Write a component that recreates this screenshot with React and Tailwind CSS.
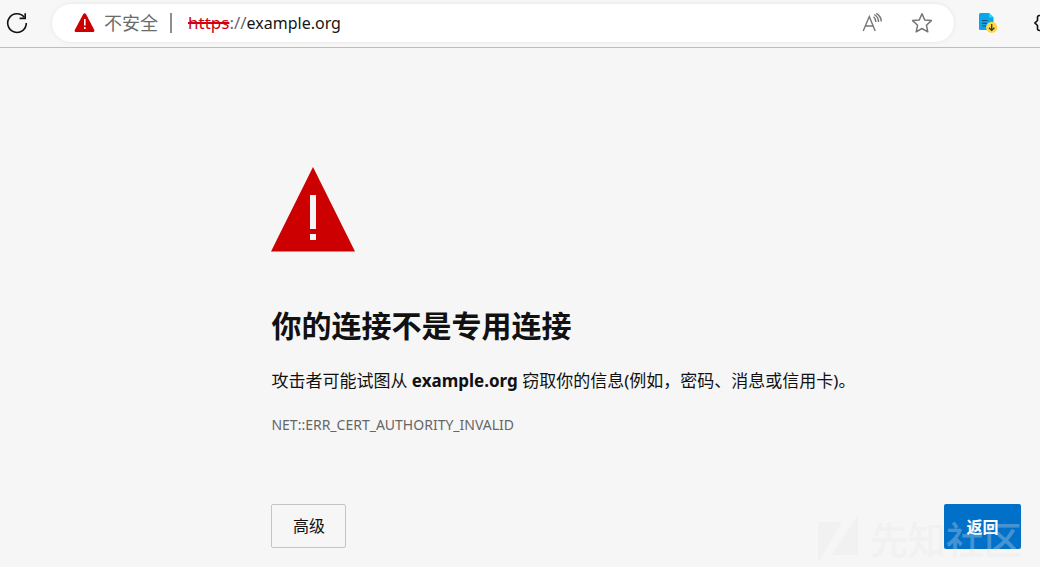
import React from "react";

function AddressBar() {
  return (
    <header className="flex h-12 items-center overflow-hidden border-b border-[#bdbdbd] bg-[#f7f7f7] pb-0.5">
      <button type="button" aria-label="刷新" className="ml-1 mr-[22px] shrink-0">
        <svg className="block" width="26" height="26" viewBox="0 0 26 26" fill="none" stroke="#111" strokeWidth="1.6">
          <path d="M20.2 7.2A9.3 9.3 0 1 0 22.3 13" />
          <path d="M21.2 3.2V8.4H15.6" />
        </svg>
      </button>
      <div className="flex h-[38px] min-w-0 flex-1 items-center rounded-full bg-white pl-[22px] pr-[21px] shadow-[0_0_4px_rgba(0,0,0,0.08)]">
        <svg className="block shrink-0" width="22" height="20" viewBox="0 0 22 20">
          <path d="M9.3 1Q10.7 -.6 12 1L20.3 17Q20.8 19 19 19H2Q0 19 .8 17Z" fill="#c00" />
          <path d="M10 6h1.6v6.5h-1.6zM10 14h1.6v2h-1.6z" fill="#fff" />
        </svg>
        <span className="ml-2 whitespace-nowrap text-[18px] leading-6 text-[#6b6b6b]">不安全</span>
        <span className="ml-3 h-5 w-0.5 shrink-0 bg-[#8d8d8d]" />
        <label htmlFor="address" className="ml-4 whitespace-nowrap text-[17px] leading-6 text-[#6b6b6b]">
          <span className="text-[#d00010] line-through decoration-2">https</span>://
        </label>
        <input id="address" type="text" defaultValue="example.org" className="min-w-0 flex-1 bg-transparent text-[16px] leading-6 text-[#151515] outline-none" />
        <button type="button" aria-label="大声朗读" className="mr-7 shrink-0">
          <svg className="block" width="22" height="22" viewBox="0 0 22 22" fill="none" stroke="#767676" strokeWidth="1.4">
            <path d="M2.2 19L8.3 4.5L14.2 19M4.5 14H12" />
            <path d="M12.6 4.8Q14.8 6.8 14.8 10M13.2 2.5Q17.5 4.8 17.5 10M15.3 1.3Q20.3 4.5 20.3 9.5" />
          </svg>
        </button>
        <button type="button" aria-label="添加到收藏夹" className="shrink-0">
          <svg className="block" width="22" height="22" viewBox="0 0 22 22" fill="none" stroke="#767676" strokeWidth="1.5" strokeLinejoin="round">
            <path d="M11 1.8L13.7 7.9L20.4 8.6L15.4 13.2L16.8 19.8L11 16.5L5.2 19.8L6.6 13.2L1.6 8.6L8.3 7.9Z" />
          </svg>
        </button>
      </div>
      <div className="flex w-[86px] shrink-0 items-center overflow-hidden pl-6">
        <button type="button" aria-label="下载扩展" className="shrink-0">
          <svg className="block" width="20" height="22" viewBox="0 0 20 22">
            <path d="M2.5 1H11L15.5 5.5V18H2.5Q1 18 1 16.5V2.5Q1 1 2.5 1Z" fill="#0ba5ec" />
            <path d="M11 1V5.5H15.5Z" fill="#12e5d0" />
            <path d="M4 8.5H9.5M4 11.3H9M4 14H8" stroke="#12557f" strokeWidth="1.2" />
            <circle cx="13.7" cy="15.4" r="5.6" fill="#ffd83b" />
            <path d="M13.7 12V18.2M11 15.7L13.7 18.4L16.4 15.7" fill="none" stroke="#333" strokeWidth="1.3" />
          </svg>
        </button>
        <button type="button" aria-label="扩展" className="ml-9 shrink-0">
          <svg className="block" width="20" height="20" viewBox="0 0 20 20" fill="none" stroke="#111" strokeWidth="1.6">
            <path d="M8 2.5H5.5Q3.5 2.5 3.5 4.5V7.5L1 10L3.5 12.5V15.5Q3.5 17.5 5.5 17.5H16V2.5Z" />
          </svg>
        </button>
      </div>
    </header>
  );
}

function Watermark() {
  return (
    <div aria-hidden="true" className="pointer-events-none absolute right-[18px] bottom-1 flex items-center gap-2 opacity-30">
      <svg width="44" height="48" viewBox="0 0 44 48" fill="#e6e6e6">
        <path d="M0 7H24L0 48ZM40 0V40H14Z" />
      </svg>
      <span className="text-[38px] leading-12 font-medium whitespace-nowrap text-[#e6e6e6]">先知社区</span>
    </div>
  );
}

export default function App() {
  return (
    <div className="relative min-h-screen overflow-hidden bg-[#f6f6f6] font-['Noto_Sans','Noto_Sans_CJK_SC',sans-serif] text-[#111]">
      <AddressBar />
      <main className="ml-[26.1%] mr-[19px] pt-[119px]">
        <svg className="block" width="84" height="85" viewBox="0 0 84 85">
          <path d="M42 0L84 84.5H0Z" fill="#c00" />
          <path d="M39 28h6v34h-6zM39 67h6v6h-6z" fill="#f5f5f5" />
        </svg>
        <h1 className="mt-[54px] text-[30px] leading-10 font-bold">你的连接不是专用连接</h1>
        <p className="mt-[21px] text-[17px] leading-7">
          攻击者可能试图从 <strong className="font-bold">example.org</strong> 窃取你的信息(例如，密码、消息或信用卡)。
        </p>
        <p className="mt-5 text-[14px] leading-5 text-[#666]">NET::ERR_CERT_AUTHORITY_INVALID</p>
        <div className="mt-[69px] flex items-start justify-between">
          <button type="button" className="h-11 min-w-[75px] rounded-xs border border-[#c4c4c4] px-5 text-[16px] leading-6">高级</button>
          <button type="button" className="h-[45px] min-w-[77px] rounded-xs bg-[#0070c9] px-5 text-[16px] leading-6 font-bold text-white">返回</button>
        </div>
      </main>
      <Watermark />
    </div>
  );
}
